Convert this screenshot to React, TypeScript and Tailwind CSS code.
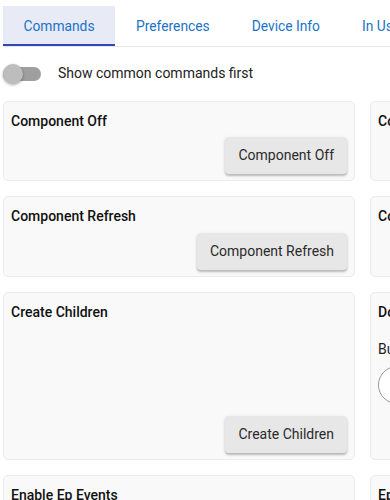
const tabs = ["Commands", "Preferences", "Device Info", "In Use By"];

function Card({
  title,
  button,
  className = "",
  children,
}: {
  title: string;
  button?: string;
  className?: string;
  children?: React.ReactNode;
}) {
  return (
    <div
      className={`flex flex-col rounded-[5px] border border-[#ececec] bg-[#f9f9f9] px-[7px] pb-[6px] pt-[9px] ${className}`}
    >
      <div className="text-[14px] font-medium leading-[20px] text-[#111]">{title}</div>
      {children}
      {button && (
        <div className="mt-auto flex justify-end">
          <button className="h-[37px] rounded-[4px] bg-[#e7e7e7] px-[13px] text-[14px] text-[#2b2b2b] shadow-[0_2px_2px_rgba(0,0,0,0.22),0_1px_4px_rgba(0,0,0,0.08)]">
            {button}
          </button>
        </div>
      )}
    </div>
  );
}

export default function App() {
  return (
    <main className="h-[500px] w-[390px] overflow-hidden bg-white font-['Roboto',sans-serif]">
      {/* Tabs */}
      <div className="ml-[3px] mt-[6px] flex w-[500px] border-b border-[#e6e6e6]">
        {tabs.map((t, i) => (
          <div
            key={t}
            className={`flex h-[40px] shrink-0 items-center whitespace-nowrap text-[13.8px] text-[#1a73c8] ${
              i === 0
                ? "w-[112px] justify-center border-b-2 border-[#3447b8] bg-[#e8eaf6] pt-[3px]"
                : "px-[21px] pt-[1px]"
            }`}
          >
            {t}
          </div>
        ))}
      </div>

      {/* Toggle */}
      <div className="ml-[3px] mt-[16px] flex items-center">
        <div className="relative h-[20px] w-[38px]">
          <div className="absolute left-0 right-0 top-[3px] h-[14px] rounded-full bg-[#9f9f9f]" />
          <div className="absolute left-0 top-0 h-[20px] w-[20px] rounded-full bg-[#bdbdbd] shadow-[0_1px_3px_rgba(0,0,0,0.35)]" />
        </div>
        <span className="ml-[17px] text-[14px] text-[#222]">Show common commands first</span>
      </div>

      {/* Command cards */}
      <div className="ml-[3px] mt-[17px] grid w-[720px] grid-cols-[352px_352px] gap-x-[15px] gap-y-[15px]">
        <Card title="Component Off" button="Component Off" className="h-[80px]" />
        <Card title="Component On" className="h-[80px]" />
        <Card title="Component Refresh" button="Component Refresh" className="h-[81px]" />
        <Card title="Configure" className="h-[81px]" />
        <Card title="Create Children" button="Create Children" className="h-[168px]" />
        <Card title="Double Tap" className="h-[168px]">
          <div className="mt-[17px] text-[14px] text-[#222]">Button number</div>
          <div className="mt-[6px] h-[38px] w-[38px] rounded-full border border-[#999] bg-white" />
        </Card>
        <Card title="Enable Ep Events" className="h-[80px]" />
        <Card title="Ep Events" className="h-[80px]" />
      </div>
    </main>
  );
}
